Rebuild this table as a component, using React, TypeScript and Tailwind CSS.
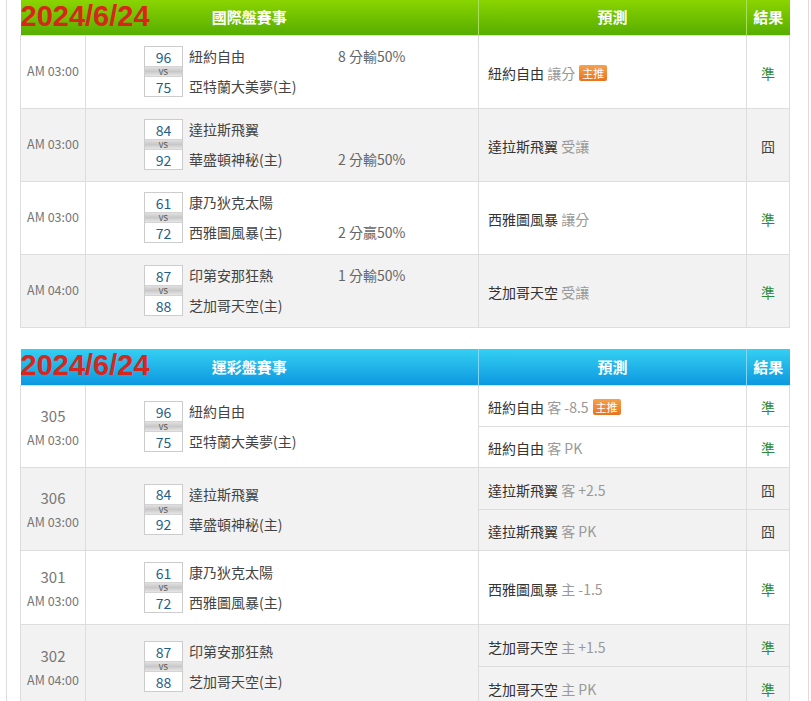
import React from "react";

type Row1 = {
  time: string;
  s1: number;
  s2: number;
  t1: string;
  t2: string;
  odds: string;
  oddsTop: boolean;
  team: string;
  kind: string;
  badge?: boolean;
  result: string;
};

type Pred = { team: string; kind: string; badge?: boolean; result: string };
type Row2 = {
  no: string;
  time: string;
  s1: number;
  s2: number;
  t1: string;
  t2: string;
  h: string[];
  preds: Pred[];
};

const rows1: Row1[] = [
  { time: "AM 03:00", s1: 96, s2: 75, t1: "紐約自由", t2: "亞特蘭大美夢(主)", odds: "8 分輸50%", oddsTop: true, team: "紐約自由", kind: "讓分", badge: true, result: "準" },
  { time: "AM 03:00", s1: 84, s2: 92, t1: "達拉斯飛翼", t2: "華盛頓神秘(主)", odds: "2 分輸50%", oddsTop: false, team: "達拉斯飛翼", kind: "受讓", result: "囧" },
  { time: "AM 03:00", s1: 61, s2: 72, t1: "康乃狄克太陽", t2: "西雅圖風暴(主)", odds: "2 分贏50%", oddsTop: false, team: "西雅圖風暴", kind: "讓分", result: "準" },
  { time: "AM 04:00", s1: 87, s2: 88, t1: "印第安那狂熱", t2: "芝加哥天空(主)", odds: "1 分輸50%", oddsTop: true, team: "芝加哥天空", kind: "受讓", result: "準" },
];

const rows2: Row2[] = [
  { no: "305", time: "AM 03:00", s1: 96, s2: 75, t1: "紐約自由", t2: "亞特蘭大美夢(主)", h: ["h-[41px]", "h-[41px]"], preds: [
    { team: "紐約自由", kind: "客 -8.5", badge: true, result: "準" },
    { team: "紐約自由", kind: "客 PK", result: "準" },
  ] },
  { no: "306", time: "AM 03:00", s1: 84, s2: 92, t1: "達拉斯飛翼", t2: "華盛頓神秘(主)", h: ["h-[42px]", "h-[41px]"], preds: [
    { team: "達拉斯飛翼", kind: "客 +2.5", result: "囧" },
    { team: "達拉斯飛翼", kind: "客 PK", result: "囧" },
  ] },
  { no: "301", time: "AM 03:00", s1: 61, s2: 72, t1: "康乃狄克太陽", t2: "西雅圖風暴(主)", h: ["h-[74px]"], preds: [
    { team: "西雅圖風暴", kind: "主 -1.5", result: "準" },
  ] },
  { no: "302", time: "AM 04:00", s1: 87, s2: 88, t1: "印第安那狂熱", t2: "芝加哥天空(主)", h: ["h-[42px]", "h-[42px]"], preds: [
    { team: "芝加哥天空", kind: "主 +1.5", result: "準" },
    { team: "芝加哥天空", kind: "主 PK", result: "準" },
  ] },
];

const font = { fontFamily: '"Noto Sans CJK TC", "Noto Sans", sans-serif' };

function Badge() {
  return (
    <span className="ml-[4px] inline-block rounded-[2px] bg-gradient-to-b from-[#f7a04a] to-[#e8731c] px-[3px] text-[11px] leading-[16px] text-white align-[1px]">
      主推
    </span>
  );
}

function ScoreBox({ s1, s2 }: { s1: number; s2: number }) {
  return (
    <div className="flex w-[39px] flex-col border border-[#cccccc] bg-white">
      <div className="flex h-[19px] items-center justify-center text-[14px] leading-[16px] text-[#1f5f8b]">{s1}</div>
      <div className="flex h-[11px] items-center justify-center border-y border-[#d4d4d4] bg-gradient-to-b from-[#e0e0e0] via-[#c8c8c8] to-[#e6e6e6] text-[8px] leading-[9px] text-[#555]">
        VS
      </div>
      <div className="flex h-[19px] items-center justify-center text-[14px] leading-[16px] text-[#1f5f8b]">{s2}</div>
    </div>
  );
}

function Match({ s1, s2, t1, t2, odds, oddsTop }: { s1: number; s2: number; t1: string; t2: string; odds?: string; oddsTop?: boolean }) {
  return (
    <div className="flex items-center pl-[58px]">
      <ScoreBox s1={s1} s2={s2} />
      <div className="ml-[6px] flex h-[51px] w-[149px] flex-col justify-between text-[14px] text-[#444]">
        <div className="leading-[20px]">{t1}</div>
        <div className="leading-[22px]">{t2}</div>
      </div>
      <div className="flex h-[51px] flex-col justify-between text-[14px] text-[#666]">
        <div className="leading-[20px]">{odds && oddsTop ? odds : "\u00a0"}</div>
        <div className="leading-[22px]">{odds && !oddsTop ? odds : "\u00a0"}</div>
      </div>
    </div>
  );
}

function PredText({ team, kind, badge }: { team: string; kind: string; badge?: boolean }) {
  return (
    <span className="text-[14px]">
      <span className="text-[#333]">{team}</span>{" "}
      <span className="text-[#999]">{kind}</span>
      {badge && <Badge />}
    </span>
  );
}

function Result({ r }: { r: string }) {
  return <span className={r === "準" ? "text-[14px] text-[#2e8b3a]" : "text-[14px] text-[#444]"}>{r}</span>;
}

function Header({ title, variant }: { title: string; variant: "green" | "blue" }) {
  const bg =
    variant === "green"
      ? "h-[35px] bg-gradient-to-b from-[#8ad400] to-[#56ae00]"
      : "h-[37px] bg-gradient-to-b from-[#34d0f2] to-[#0b96df]";
  const line = variant === "green" ? "border-[#a8e05a]" : "border-[#7fd8f5]";
  return (
    <thead>
      <tr className={`${bg} text-[15px] font-bold text-white`}>
        <th colSpan={2} className="relative p-0 font-bold">
          <span
            className="absolute left-0 top-[-2px] text-[29px] font-bold leading-[36px] text-[#d7261e]"
            style={{ fontFamily: '"Liberation Sans", Arial, sans-serif' }}
          >
            2024/6/24
          </span>
          {title}
        </th>
        <th className={`border-l ${line} p-0 font-bold`}>預測</th>
        <th className={`border-l ${line} p-0 font-bold`}>結果</th>
      </tr>
    </thead>
  );
}

const td = "border border-[#dddddd] p-0";

export default function App() {
  return (
    <div className="min-h-[701px] bg-white" style={font}>
      <div className="mx-[6px] mr-[2px] min-h-[701px] border-x border-[#dddddd] pl-[13px] pr-[18px]">
        <table className="w-[769px] table-fixed border-collapse">
          <colgroup>
            <col className="w-[65px]" />
            <col className="w-[393px]" />
            <col className="w-[268px]" />
            <col className="w-[43px]" />
          </colgroup>
          <Header title="國際盤賽事" variant="green" />
          <tbody>
            {rows1.map((r, i) => (
              <tr key={i} className={i % 2 === 1 ? "h-[73px] bg-[#f2f2f2]" : "h-[73px] bg-white"}>
                <td className={`${td} text-center text-[12.5px] text-[#777]`}>{r.time}</td>
                <td className={td}>
                  <Match s1={r.s1} s2={r.s2} t1={r.t1} t2={r.t2} odds={r.odds} oddsTop={r.oddsTop} />
                </td>
                <td className={`${td} pl-[9px]`}>
                  <PredText team={r.team} kind={r.kind} badge={r.badge} />
                </td>
                <td className={`${td} text-center`}>
                  <Result r={r.result} />
                </td>
              </tr>
            ))}
          </tbody>
        </table>

        <table className="mt-[21px] w-[769px] table-fixed border-collapse">
          <colgroup>
            <col className="w-[65px]" />
            <col className="w-[393px]" />
            <col className="w-[268px]" />
            <col className="w-[43px]" />
          </colgroup>
          <Header title="運彩盤賽事" variant="blue" />
          <tbody>
            {rows2.map((r, i) => {
              const bg = i % 2 === 1 ? "bg-[#f2f2f2]" : "bg-white";
              const span = r.preds.length;
              return (
                <React.Fragment key={i}>
                  {r.preds.map((p, j) => (
                    <tr key={j} className={`${bg} ${r.h[j]}`}>
                      {j === 0 && (
                        <>
                          <td rowSpan={span} className={`${td} text-center text-[#777]`}>
                            <div className="text-[15px] leading-[22px]">{r.no}</div>
                            <div className="mt-[4px] text-[12.5px] leading-[18px]">{r.time}</div>
                          </td>
                          <td rowSpan={span} className={td}>
                            <Match s1={r.s1} s2={r.s2} t1={r.t1} t2={r.t2} />
                          </td>
                        </>
                      )}
                      <td className={`${td} pl-[9px]`}>
                        <PredText team={p.team} kind={p.kind} badge={p.badge} />
                      </td>
                      <td className={`${td} text-center`}>
                        <Result r={p.result} />
                      </td>
                    </tr>
                  ))}
                </React.Fragment>
              );
            })}
          </tbody>
        </table>
      </div>
    </div>
  );
}
